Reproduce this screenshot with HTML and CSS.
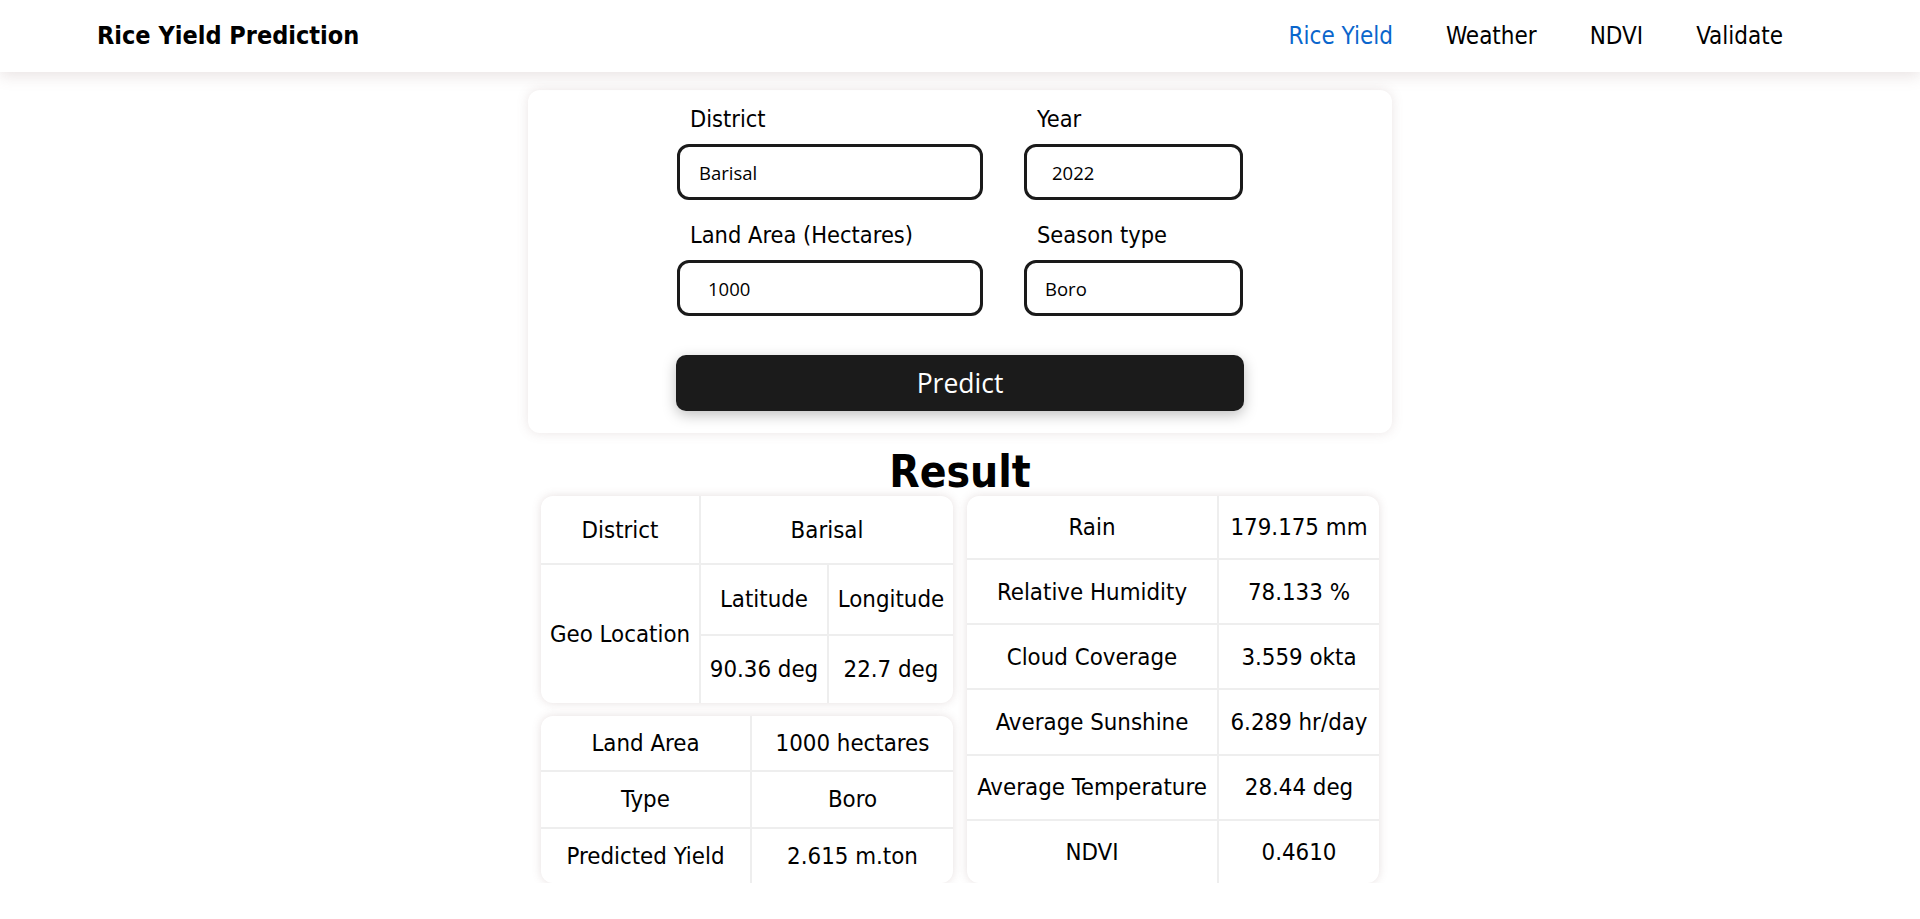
FILE: index.html
```html
<!DOCTYPE html>
<html lang="en">
<head>
<meta charset="utf-8">
<title>Rice Yield Prediction</title>
<link rel="stylesheet" href="styles.css">
</head>
<body>
<header class="topbar">
  <div class="brand">Rice Yield Prediction</div>
  <nav class="nav">
    <a class="nav-link active" href="#">Rice Yield</a>
    <a class="nav-link" href="#">Weather</a>
    <a class="nav-link" href="#">NDVI</a>
    <a class="nav-link" href="#">Validate</a>
  </nav>
</header>
<main class="page">
  <section class="form-card">
    <div class="form-grid">
      <div class="field">
        <label class="field-label">District</label>
        <input class="field-input pad-a" type="text" value="Barisal">
      </div>
      <div class="field">
        <label class="field-label">Year</label>
        <input class="field-input pad-b" type="text" value="2022">
      </div>
      <div class="field">
        <label class="field-label">Land Area (Hectares)</label>
        <input class="field-input pad-c" type="text" value="1000">
      </div>
      <div class="field">
        <label class="field-label">Season type</label>
        <input class="field-input pad-d" type="text" value="Boro">
      </div>
    </div>
    <button class="predict-btn" type="button">Predict</button>
  </section>

  <h2 class="result-title">Result</h2>

  <div class="results">
    <div class="results-left">
      <div class="tcard t-geo">
        <table class="rtable">
          <colgroup><col class="c-159"><col class="c-128"><col class="c-125"></colgroup>
          <tr><td>District</td><td colspan="2">Barisal</td></tr>
          <tr><td rowspan="2">Geo Location</td><td>Latitude</td><td>Longitude</td></tr>
          <tr><td>90.36 deg</td><td>22.7 deg</td></tr>
        </table>
      </div>
      <div class="tcard t-yield">
        <table class="rtable">
          <colgroup><col class="c-210"><col class="c-202"></colgroup>
          <tr><td>Land Area</td><td>1000 hectares</td></tr>
          <tr><td>Type</td><td>Boro</td></tr>
          <tr><td>Predicted Yield</td><td>2.615 m.ton</td></tr>
        </table>
      </div>
    </div>
    <div class="tcard t-weather">
      <table class="rtable">
        <colgroup><col class="c-251"><col class="c-161"></colgroup>
        <tr><td>Rain</td><td>179.175 mm</td></tr>
        <tr><td>Relative Humidity</td><td>78.133 %</td></tr>
        <tr><td>Cloud Coverage</td><td>3.559 okta</td></tr>
        <tr><td>Average Sunshine</td><td>6.289 hr/day</td></tr>
        <tr><td>Average Temperature</td><td>28.44 deg</td></tr>
        <tr><td>NDVI</td><td>0.4610</td></tr>
      </table>
    </div>
  </div>
</main>
</body>
</html>
```

FILE: styles.css
```css
* { box-sizing: border-box; }

html, body {
  margin: 0;
  padding: 0;
  background: #ffffff;
}

body {
  font-family: "DejaVu Sans Condensed", "DejaVu Sans", sans-serif;
  font-stretch: condensed;
  color: #000;
}

.topbar {
  position: relative;
  z-index: 2;
  height: 72px;
  display: flex;
  align-items: center;
  justify-content: space-between;
  padding: 0 137px 0 97px;
  background: #fff;
  box-shadow: 0 4px 14px rgba(135, 100, 100, 0.18);
}

.brand {
  font-size: 25px;
  font-weight: bold;
  line-height: 30px;
}

.nav {
  display: flex;
  gap: 53px;
}

.nav-link {
  font-size: 24px;
  line-height: 30px;
  color: #000;
  text-decoration: none;
}

.nav-link.active {
  color: #0a66cc;
}

.page {
  display: flex;
  flex-direction: column;
  align-items: center;
  padding-top: 18px;
}

.form-card {
  width: 864px;
  padding: 16px 0 22px;
  background: #fff;
  border-radius: 12px;
  box-shadow: 0 0 12px rgba(130, 95, 95, 0.17);
}

.form-grid {
  display: grid;
  grid-template-columns: 306px 219px;
  column-gap: 41px;
  row-gap: 22px;
  justify-content: center;
}

.field-label {
  display: block;
  padding-left: 13px;
  margin-bottom: 12px;
  font-size: 23.4px;
  line-height: 26px;
}

.field-input {
  display: block;
  width: 100%;
  height: 56px;
  border: 3px solid #1a1a1a;
  border-radius: 12px;
  background: #fff;
  color: #000;
  font-family: "Open Sans", sans-serif;
  font-size: 18.5px;
  outline: none;
}

.pad-a { padding-left: 19px; }
.pad-b { padding-left: 25px; }
.pad-c { padding-left: 28px; }
.pad-d { padding-left: 18px; }

.predict-btn {
  display: block;
  width: 568px;
  height: 56px;
  margin: 39px auto 0;
  border: none;
  border-radius: 10px;
  background: #1b1b1b;
  color: #fff;
  font-family: "Open Sans", sans-serif;
  font-size: 26.5px;
  box-shadow: 0 4px 14px rgba(0, 0, 0, 0.25);
}

.result-title {
  margin: 16px 0 1px;
  font-size: 44px;
  line-height: 46px;
  font-weight: bold;
}

.results {
  display: flex;
  gap: 14px;
  align-items: stretch;
}

.results-left {
  display: flex;
  flex-direction: column;
  gap: 13px;
  width: 412px;
}

.tcard {
  background: #fff;
  border-radius: 12px;
  overflow: hidden;
  box-shadow: 0 0 10px rgba(130, 95, 95, 0.2);
}

.t-geo { height: 207px; }
.t-yield { height: 167px; }
.t-weather { width: 412px; height: 387px; }

.rtable {
  width: 100%;
  height: 100%;
  border-collapse: collapse;
  border-style: hidden;
  table-layout: fixed;
}

.rtable td {
  border: 2px solid #eeeeee;
  padding: 0;
  text-align: center;
  vertical-align: middle;
  font-size: 23.8px;
  white-space: nowrap;
}

.c-159 { width: 159px; }
.c-128 { width: 128px; }
.c-125 { width: 125px; }
.c-210 { width: 210px; }
.c-202 { width: 202px; }
.c-251 { width: 251px; }
.c-161 { width: 161px; }
```
